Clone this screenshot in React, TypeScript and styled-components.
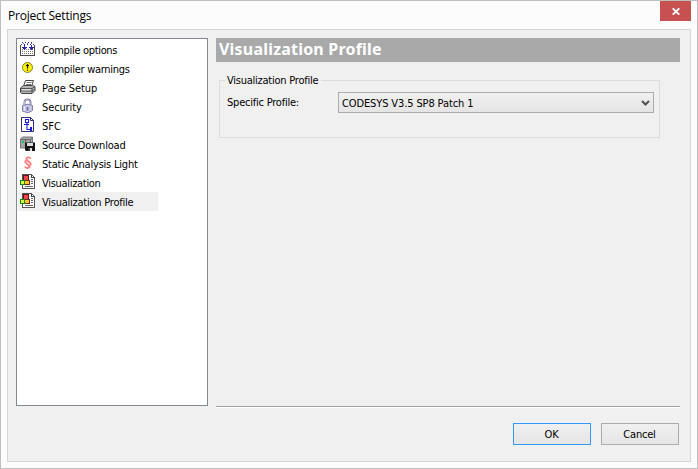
import React from "react";
import styled, { createGlobalStyle } from "styled-components";

const Global = createGlobalStyle`
  * { box-sizing: border-box; }
  html, body { margin: 0; padding: 0; }
  body { background: #fcfcfc; overflow: hidden; }
`;

const Window = styled.div`
  width: 698px;
  height: 469px;
  display: flex;
  flex-direction: column;
  background: #fcfcfc;
  border: 1px solid #bfbfbf;
  color: #000;
  font: 11px/14px "DejaVu Sans Condensed", "DejaVu Sans", sans-serif;
  font-stretch: condensed;
`;

const TitleBar = styled.header`
  height: 28px;
  flex: none;
  display: flex;
  justify-content: space-between;
  padding: 0 6px 0 7px;
`;

const Title = styled.h1`
  margin: 6px 0 0;
  font: 400 12px/17px "Open Sans", sans-serif;
  letter-spacing: -0.22px;
`;

const CloseButton = styled.button`
  width: 31px;
  height: 20px;
  border: 0;
  padding: 0;
  background: #c75050;
  display: flex;
  align-items: center;
  justify-content: center;
`;

const Body = styled.main`
  width: 684px;
  height: 433px;
  margin-left: 6px;
  padding: 8px 10px 0 8px;
  background: #f0f0f0;
  border: 1px solid #d6d6d6;
  display: flex;
  flex-direction: column;
`;

const Columns = styled.div`
  display: flex;
  gap: 8px;
  height: 370px;
`;

const CategoryList = styled.ul`
  width: 192px;
  height: 368px;
  margin: 0;
  padding: 1px 0 0 1px;
  list-style: none;
  background: #fff;
  border: 1px solid #828790;
`;

const Category = styled.li<{ $selected?: boolean }>`
  width: 140px;
  height: 19px;
  padding: 1px 0 0 2px;
  display: flex;
  align-items: flex-start;
  gap: 6px;
  line-height: 20px;
  background: ${(p) => (p.$selected ? "#f0f0f0" : "transparent")};
`;

const Label = styled.span<{ $spacing?: number }>`
  white-space: nowrap;
  letter-spacing: ${(p) => p.$spacing ?? 0}px;
`;

const Icon = styled.svg`
  width: 16px;
  height: 16px;
  flex: none;
  display: block;
`;

const Page = styled.section`
  width: 464px;
  display: flex;
  flex-direction: column;
  border-bottom: 1px solid #fff;
`;

const PageInner = styled.div`
  flex: 1;
  border-bottom: 1px solid #a0a0a0;
`;

const PageTitle = styled.h2`
  height: 24px;
  margin: 0;
  padding-left: 3px;
  background: #a9a9a9;
  color: #fff;
  font: 700 16px/22px "Noto Sans", sans-serif;
  letter-spacing: 0.2px;
`;

const Group = styled.fieldset`
  width: 441px;
  height: 65px;
  margin: 11px 0 0 3px;
  padding: 0 5px 0 7px;
  border: 1px solid #dcdcdc;
`;

const Legend = styled.legend`
  margin-left: -2px;
  padding: 1px 3px 0 2px;
  height: 14px;
  letter-spacing: -0.24px;
`;

const Field = styled.div`
  display: flex;
  align-items: center;
  justify-content: space-between;
  margin-top: 5px;
`;

const Select = styled.div`
  width: 316px;
  height: 21px;
  padding: 2px 3px 0;
  display: flex;
  align-items: center;
  justify-content: space-between;
  border: 1px solid #acacac;
  background: linear-gradient(#f0f0f0, #e5e5e5);
`;

const Chevron = styled.svg`
  width: 9px;
  height: 6px;
  margin-bottom: 1px;
`;

const Actions = styled.footer`
  display: flex;
  justify-content: flex-end;
  gap: 10px;
  padding: 15px 1px 0 0;
`;

const Button = styled.button<{ $primary?: boolean }>`
  width: 78px;
  height: 22px;
  padding: 1px 1px 0 0;
  border: 1px solid ${(p) => (p.$primary ? "#3399ff" : "#acacac")};
  background: linear-gradient(#f0f0f0, #e5e5e5);
  color: #000;
  font: inherit;
  letter-spacing: -0.2px;
`;

const CompileIcon = () => (
  <Icon viewBox="0 0 16 16" shapeRendering="crispEdges">
    <path d="M.5 4v11M14.5 4v11M0 14.5h15" stroke="#4a4a4a" fill="none" />
    <path d="M2 8.5h12M2 10.5h12M2 12.5h12" stroke="#777" strokeDasharray="1 1" />
    <path d="M2 1.5h12M1 3.5h13" stroke="#2828a0" strokeDasharray="1 2" />
    <path d="M3 2.5h10" stroke="#6868c0" strokeDasharray="1 3" />
    <path d="M4 4h1v2h2v1H6v1H5v1H4V8H3V7H2V6h2zM11 4h1v2h2v1h-1v1h-1v1h-1V8h-1V7H9V6h2z" fill="#2828a8" />
  </Icon>
);

const WarningIcon = () => (
  <Icon viewBox="0 0 16 16">
    <circle cx="7.5" cy="7.5" r="5" fill="#fff200" stroke="#8b8324" />
    <path d="M7.5 4v4.5M6 5.5h3M7.5 9.5v1.3" stroke="#111" strokeWidth="1.2" />
  </Icon>
);

const PrinterIcon = () => (
  <Icon viewBox="0 0 16 16">
    <path d="M5.5 1.5h8l-2 6h-8z" fill="#fff" stroke="#444" />
    <path d="M6.5 3.5h5M6 5.5h5" stroke="#777" />
    <path d="m.5 9 3-2.5h9l2.5 1v4L12 14.5H1.5l-1-1z" fill="#b5b5b5" stroke="#444" />
    <path d="M1 9.5h11l3-2M1 12h11l3-2M12 9.5v5" stroke="#555" fill="none" />
    <path d="M2 10.8h9" stroke="#eee" />
  </Icon>
);

const LockIcon = () => (
  <Icon viewBox="0 0 16 16">
    <path d="M4.5 8V4.5C4.5.4 10.5.4 10.5 4.5V8" fill="none" stroke="#8082ae" strokeWidth="2" />
    <path d="M4.5 7V4.5C4.5 1 10 1 10 4.5V7" fill="none" stroke="#dddff0" strokeWidth=".7" />
    <path d="M2.5 7.5 8 6.2l4.5 1.3v5L8 14.8l-5.5-1.6z" fill="#c7c9e3" stroke="#8082ae" />
    <path d="M7.5 9v3.5" stroke="#6365a0" strokeWidth="1.6" />
    <path d="M4.5 8.5v4" stroke="#eef" />
  </Icon>
);

const SfcIcon = () => (
  <Icon viewBox="0 0 16 16">
    <path d="M1.5.5h9l3 3v11h-12z" fill="#fff" stroke="#30307c" />
    <path d="M10.5.5v3h3" fill="none" stroke="#30307c" />
    <path d="M5.5 2.5h3v3h-3zM7 6v6.5h3M4 7.5h5M10.5 10.5h1v3h-1z" fill="none" stroke="#1919dd" strokeWidth="1.1" />
  </Icon>
);

const DownloadIcon = () => (
  <Icon viewBox="0 0 16 16">
    <path d="m.5 3 2-2h10v9l-2 2H.5z" fill="#a8a8a8" stroke="#777" />
    <path d="M1 3.5h9.5l2-2M5.5 4v8M10.5 3.5V7" stroke="#666" fill="none" />
    <path d="M2 5h2v2H2z" fill="#00c858" />
    <path d="M5 6.5h10V15H6l-1-1z" fill="#151515" />
    <path d="M7 7h6v3H7zM8 12h4v3H8z" fill="#ddd" />
    <path d="M8 12h2v3H8z" fill="#333" />
  </Icon>
);

const SectionIcon = () => (
  <Icon viewBox="0 0 16 16">
    <path
      d="M10.5 3.8C9.8 1.8 6 2 6.3 4.2c.3 1.8 4.6 2.8 4.5 5-.1 1.2-2 1.6-3 .9M8.2 5.6c-1.1-.6-3 0-3 1.2 0 2 4.5 2.9 4.4 4.9-.2 1.8-4 1.7-4.6-.3"
      fill="none"
      stroke="#fb8080"
      strokeWidth="1.9"
    />
  </Icon>
);

const VisualizationIcon = () => (
  <Icon viewBox="0 0 16 16" shapeRendering="crispEdges">
    <path d="M2.5.5h9l3 3v11h-12z" fill="#fff" stroke="#555" />
    <path d="M11.5.5v3h3" fill="none" stroke="#444" />
    <path d="M11 5.5h2M11 7.5h2M11 9.5h2M5 12.5h8" stroke="#666" />
    <path d="M3.5 1.5h5v5h-5z" fill="#f04848" stroke="#601818" />
    <path d="M4.5 6.5h5v4h-5z" fill="#ffc928" stroke="#7a2525" />
    <path d="M.5 6.5h4v4h-4z" fill="#e4ff40" stroke="#118811" />
  </Icon>
);

const categories = [
  { name: "Compile options", icon: CompileIcon, spacing: -0.33 },
  { name: "Compiler warnings", icon: WarningIcon, spacing: -0.28 },
  { name: "Page Setup", icon: PrinterIcon, spacing: -0.06 },
  { name: "Security", icon: LockIcon, spacing: -0.12 },
  { name: "SFC", icon: SfcIcon, spacing: 0 },
  { name: "Source Download", icon: DownloadIcon, spacing: -0.18 },
  { name: "Static Analysis Light", icon: SectionIcon, spacing: -0.21 },
  { name: "Visualization", icon: VisualizationIcon, spacing: -0.3 },
  { name: "Visualization Profile", icon: VisualizationIcon, spacing: -0.24, selected: true },
];

export default function App() {
  return (
    <>
      <Global />
      <Window>
        <TitleBar>
          <Title>Project Settings</Title>
          <CloseButton aria-label="Close">
            <svg width="8" height="7" viewBox="0 0 8 7">
              <path d="M.7.3 7.3 6.7M7.3.3.7 6.7" stroke="#fff" strokeWidth="1.8" />
            </svg>
          </CloseButton>
        </TitleBar>
        <Body>
          <Columns>
            <CategoryList>
              {categories.map(({ name, icon: Glyph, spacing, selected }) => (
                <Category key={name} $selected={selected}>
                  <Glyph />
                  <Label $spacing={spacing}>{name}</Label>
                </Category>
              ))}
            </CategoryList>
            <Page>
              <PageInner>
                <PageTitle>Visualization Profile</PageTitle>
                <Group>
                  <Legend>Visualization Profile</Legend>
                  <Field>
                    <Label $spacing={-0.22}>Specific Profile:</Label>
                    <Select>
                      <Label $spacing={-0.12}>CODESYS V3.5 SP8 Patch 1</Label>
                      <Chevron viewBox="0 0 9 6">
                        <path d="M1 1l3.5 3.5L8 1" fill="none" stroke="#505050" strokeWidth="2" />
                      </Chevron>
                    </Select>
                  </Field>
                </Group>
              </PageInner>
            </Page>
          </Columns>
          <Actions>
            <Button $primary>OK</Button>
            <Button>Cancel</Button>
          </Actions>
        </Body>
      </Window>
    </>
  );
}
